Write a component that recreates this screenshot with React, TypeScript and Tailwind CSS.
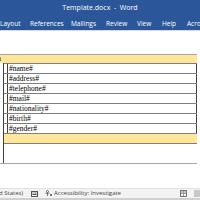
const tabs = [
  { label: "Layout", w: "w-[30px]" },
  { label: "References", w: "w-[41px]" },
  { label: "Mailings", w: "w-[35px]" },
  { label: "Review", w: "w-[31px]" },
  { label: "View", w: "w-[25px]" },
  { label: "Help", w: "w-[25px]" },
  { label: "Acrobat", w: "w-[30px]" },
];

const fields = ["#name#", "#address#", "#telephone#", "#mail#", "#nationality#", "#birth#", "#gender#"];

export default function App() {
  return (
    <div className="flex h-[200px] w-[200px] flex-col overflow-hidden bg-white font-['Open_Sans','Liberation_Sans',sans-serif]">
      {/* Title bar */}
      <div className="flex h-[17px] items-center justify-center bg-[#2b579a] text-[7px] text-white">
        Template.docx&nbsp;&nbsp;-&nbsp;&nbsp;Word
      </div>
      {/* Ribbon tabs */}
      <div className="flex h-[13px] items-center whitespace-nowrap bg-[#2b579a] text-[6.5px] text-white">
        {tabs.map((t) => (
          <div key={t.label} className={`${t.w} shrink-0`}>
            {t.label}
          </div>
        ))}
      </div>
      <div className="h-px bg-[#d9d9d9]" />

      {/* Document */}
      <div className="flex-1 pt-[23px] font-['Liberation_Serif',serif] text-[7.5px] leading-none text-black">
        <div className="mr-[3px] border-t border-[#a6a6a6]">
          <div className="flex h-[8px] items-center bg-[#ffe699] font-bold">
            <span className="-ml-[3px]">a</span>
          </div>
          <div className="ml-[3px] border-l border-[#404040]">
            {fields.map((f) => (
              <div key={f} className="flex h-[10px] border-t border-[#7f7f7f]">
                <div className="w-[4px] border-r border-[#404040]" />
                <div className="flex flex-1 items-center border-r border-[#404040] pl-[1px]">{f}</div>
              </div>
            ))}
            <div className="h-[10px] border-t border-[#7f7f7f] bg-[#ffe699]" />
            <div className="h-[20px] border-t border-[#7f7f7f]" />
          </div>
          <div className="h-px bg-[#a6a6a6]" />
        </div>
      </div>

      {/* Status bar */}
      <div className="flex h-[10px] items-center whitespace-nowrap border-t border-[#e1e1e1] bg-[#f3f3f3] text-[6px] text-[#444]">
        <span className="-ml-[1px] w-[32px]">d States)</span>
        <svg width="7" height="6" viewBox="0 0 7 6" className="mr-[7px]">
          <rect x="0.5" y="0.5" width="6" height="5" fill="none" stroke="#555" />
          <path d="M1.5 2h1M3.5 2h2M1.5 3.5h4" stroke="#555" />
        </svg>
        <svg width="8" height="7" viewBox="0 0 8 7" className="mr-[1px]">
          <circle cx="2.5" cy="1.5" r="1" fill="none" stroke="#555" strokeWidth="0.8" />
          <path d="M0.5 3.2h4M2.5 3v3M5 4l2 2M7 4l-2 2" stroke="#555" strokeWidth="0.8" fill="none" />
        </svg>
        <span>Accessibility: Investigate</span>
        <div className="flex-1" />
        <svg width="7" height="7" viewBox="0 0 7 7" className="mr-[7px]">
          <rect x="0.5" y="0.5" width="6" height="6" fill="none" stroke="#777" />
          <path d="M3.5 0.5v6M1 2h2M1 3.5h2M4 2h2M4 3.5h2" stroke="#777" strokeWidth="0.7" />
        </svg>
        <div className="h-[7px] w-[6px] bg-[#c8c8c8]" />
      </div>
      <div className="h-[2px] bg-[#d0d0d0]" />
    </div>
  );
}
